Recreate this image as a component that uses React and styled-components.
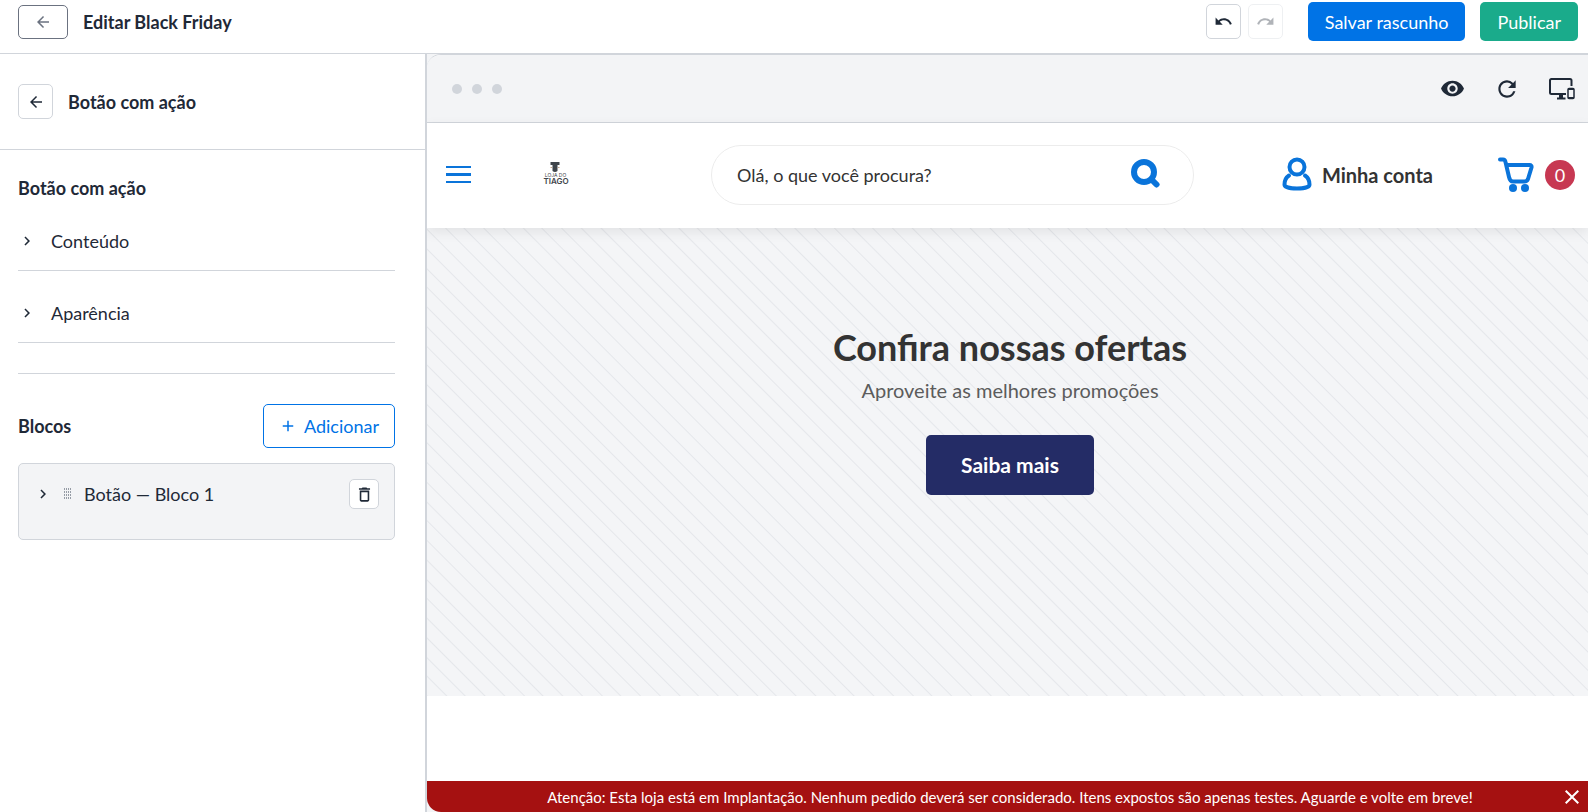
import styled, { createGlobalStyle } from "styled-components";
import {
    MdAdd,
    MdArrowBack,
    MdChevronRight,
    MdClose,
    MdDeleteOutline,
    MdRedo,
    MdRefresh,
    MdUndo,
    MdVisibility,
} from "react-icons/md";

const sections = ["Conteúdo", "Aparência"]

export default function App(){
    return(
        <>
            <GlobalStyle />
            <Page>
                <TopBar />
                <Workspace>
                    <SideBar />
                    <Preview />
                </Workspace>
            </Page>
        </>
    )
}

function TopBar(){
    return(
        <Header>
            <BackButton aria-label="Voltar"><MdArrowBack size={18} /></BackButton>
            <PageTitle>Editar Black Friday</PageTitle>
            <History>
                <SquareButton aria-label="Desfazer"><MdUndo size={19} /></SquareButton>
                <SquareButton aria-label="Refazer" disabled><MdRedo size={19} /></SquareButton>
            </History>
            <Actions>
                <ActionButton $color="#0073e6">Salvar rascunho</ActionButton>
                <ActionButton $color="#1aab8b">Publicar</ActionButton>
            </Actions>
        </Header>
    )
}

function SideBar(){
    return(
        <Side>
            <SideHeader>
                <SquareButton aria-label="Voltar"><MdArrowBack size={18} /></SquareButton>
                <Title>Botão com ação</Title>
            </SideHeader>
            <SideContent>
                <Title>Botão com ação</Title>
                {sections.map((name) => (
                    <SectionButton key={name} aria-expanded="false">
                        <MdChevronRight size={18} />
                        {name}
                    </SectionButton>
                ))}
                <Blocks>
                    <BlocksHeader>
                        <Title>Blocos</Title>
                        <AddButton><MdAdd size={18} />Adicionar</AddButton>
                    </BlocksHeader>
                    <BlockCard>
                        <BlockToggle aria-expanded="false">
                            <MdChevronRight size={18} />
                            <GripIcon />
                            Botão — Bloco 1
                        </BlockToggle>
                        <DeleteButton aria-label="Excluir bloco"><MdDeleteOutline size={19} /></DeleteButton>
                    </BlockCard>
                </Blocks>
            </SideContent>
        </Side>
    )
}

function Preview(){
    return(
        <PreviewArea>
            <Browser>
                <BrowserBar>
                    <Dots><Dot /><Dot /><Dot /></Dots>
                    <ToolButton aria-label="Visualizar"><MdVisibility size={25} /></ToolButton>
                    <ToolButton aria-label="Atualizar"><MdRefresh size={26} /></ToolButton>
                    <ToolButton aria-label="Dispositivos"><DevicesIcon /></ToolButton>
                </BrowserBar>
                <StoreHeader>
                    <StoreBrand>
                        <MenuButton aria-label="Menu"><MenuIcon /></MenuButton>
                        <StoreLogo />
                    </StoreBrand>
                    <Search onSubmit={(e) => e.preventDefault()}>
                        <SearchInput type="search" aria-label="Buscar" placeholder="Olá, o que você procura?" />
                        <SearchButton aria-label="Buscar"><SearchIcon /></SearchButton>
                    </Search>
                    <StoreLinks>
                        <Account href="#conta"><UserIcon />Minha conta</Account>
                        <Cart href="#carrinho" aria-label="Carrinho"><CartIcon /><Badge>0</Badge></Cart>
                    </StoreLinks>
                </StoreHeader>
                <Offers>
                    <OffersTitle>Confira nossas ofertas</OffersTitle>
                    <OffersText>Aproveite as melhores promoções</OffersText>
                    <OffersLink href="#ofertas">Saiba mais</OffersLink>
                </Offers>
                <Notice>
                    <NoticeText>Atenção: Esta loja está em Implantação. Nenhum pedido deverá ser considerado. Itens expostos são apenas testes. Aguarde e volte em breve!</NoticeText>
                    <NoticeClose aria-label="Fechar"><MdClose size={24} /></NoticeClose>
                </Notice>
            </Browser>
        </PreviewArea>
    )
}

function GripIcon(){
    return(
        <svg width="8" height="12" viewBox="0 0 8 12" fill="#969ca6" aria-hidden="true">
            {[0, 3, 6, 9].map((y) => [0, 2, 4, 6].map((x) => (
                <rect key={`${x}-${y}`} x={x} y={y} width="1" height="2" />
            )))}
        </svg>
    )
}

function DevicesIcon(){
    return(
        <svg width="26" height="22" viewBox="0 0 26 22" fill="none" stroke="currentColor" strokeWidth="2" aria-hidden="true">
            <path d="M17 16H2.5Q1 16 1 14.500V2.500Q1 1 2.500 1H21Q22.500 1 22.500 2.500V8" />
            <path d="M8 20.500H16.500" strokeWidth="2" />
            <path d="M12 16V20.500" strokeWidth="4" />
            <rect x="19" y="10.500" width="6" height="10" rx="1" strokeWidth="1.500" />
            <path d="M19 11.500H25M19 19.500H25" strokeWidth="1" />
        </svg>
    )
}

function MenuIcon(){
    return(
        <svg width="25" height="18" viewBox="0 0 25 18" fill="#0a74da" aria-hidden="true">
            <rect width="25" height="2" />
            <rect y="7" width="25" height="3" />
            <rect y="15" width="25" height="2" />
        </svg>
    )
}

function StoreLogo(){
    return(
        <svg width="28" height="26" viewBox="0 0 28 26" fill="#3f454b" role="img" aria-label="Loja do Tiago">
            <path d="M7.500 0H16.500V3H14.500V9Q12 11 9.500 9V3H7.500Z" />
            <path d="M7.500 5.500H9M15 5.500H16.500" stroke="#c9a98a" />
            <text x="12.500" y="14.500" fontSize="5" textAnchor="middle" fontFamily="Inter, sans-serif">LOJA DO</text>
            <text x="13" y="22" fontSize="8" fontWeight="600" textAnchor="middle" fontFamily="Inter, sans-serif">TIAGO</text>
        </svg>
    )
}

function SearchIcon(){
    return(
        <svg width="29" height="32" viewBox="0 0 29 32" fill="none" stroke="#0a74da" strokeLinecap="round" aria-hidden="true">
            <circle cx="13" cy="13" r="10" strokeWidth="6" />
            <path d="M21 21L25.500 25.500" strokeWidth="6" />
        </svg>
    )
}

function UserIcon(){
    return(
        <svg width="30" height="36" viewBox="0 0 30 36" fill="none" stroke="#0a74da" strokeWidth="4" strokeLinecap="round" aria-hidden="true">
            <circle cx="15" cy="10" r="7.500" />
            <path d="M7 18.500C4 20.500 2.500 24 2.500 27.500C2.500 30 8 31.500 15 31.500S27.500 30 27.500 27.500C27.500 24 26 20.500 23 18.500" />
        </svg>
    )
}

function CartIcon(){
    return(
        <svg width="36" height="36" viewBox="0 0 36 36" fill="none" stroke="#0a74da" strokeWidth="4" strokeLinecap="round" strokeLinejoin="round" aria-hidden="true">
            <path d="M2 2.500H5Q7 2.500 7.500 5L11 20Q12 24.500 15 24.500H26.500Q29 24.500 30 22L33.500 10.500Q34 8 31.500 8H8.500" />
            <circle cx="15" cy="31" r="4" fill="#0a74da" stroke="none" />
            <circle cx="27" cy="31" r="4" fill="#0a74da" stroke="none" />
        </svg>
    )
}

const GlobalStyle = createGlobalStyle`
    * {
        box-sizing: border-box;
    }
    body {
        margin: 0;
        background: #ffffff;
        color: #1f2937;
        font-family: Lato, sans-serif;
        font-size: 18px;
        line-height: 22px;
    }
    h1, h2, p {
        margin: 0;
    }
    button {
        padding: 0;
        border: none;
        background: none;
        color: inherit;
        font: inherit;
        cursor: pointer;
    }
    svg {
        display: block;
        flex-shrink: 0;
    }
`
const Page = styled.div`
    display: flex;
    flex-direction: column;
    min-height: 100vh;
`
const Header = styled.header`
    display: flex;
    align-items: center;
    height: 54px;
    padding: 0 10px 10px 18px;
    border-bottom: 1px solid #d1d5db;
`
const BackButton = styled.button`
    display: flex;
    justify-content: center;
    align-items: center;
    width: 50px;
    height: 34px;
    margin-right: 15px;
    border: 1px solid #6b7280;
    border-radius: 5px;
    color: #6b7280;
`
const Title = styled.h2`
    font-size: 18px;
    font-weight: 700;
    line-height: 22px;
`
const PageTitle = styled(Title).attrs({ as: "h1" })``

const History = styled.div`
    display: flex;
    gap: 7px;
    margin-left: auto;
`
const SquareButton = styled.button`
    display: flex;
    justify-content: center;
    align-items: center;
    width: 35px;
    height: 35px;
    background: #ffffff;
    border: 1px solid #d1d5db;
    border-radius: 5px;

    &:disabled {
        opacity: 0.35;
        cursor: default;
    }
`
const Actions = styled.div`
    display: flex;
    gap: 15px;
    margin-left: 25px;
`
const ActionButton = styled.button`
    height: 39px;
    padding: 0 17px;
    background: ${(props) => props.$color};
    border-radius: 5px;
    color: #ffffff;
`
const Workspace = styled.main`
    display: flex;
    flex: 1;
`
const Side = styled.aside`
    flex-shrink: 0;
    width: 425px;
`
const SideHeader = styled.div`
    display: flex;
    align-items: center;
    gap: 15px;
    height: 96px;
    padding: 0 18px;
    border-bottom: 1px solid #d1d5db;
`
const SideContent = styled.div`
    padding: 27px 30px 27px 18px;
`
const SectionButton = styled.button`
    display: flex;
    align-items: center;
    gap: 15px;
    width: 100%;
    padding: 31px 0 18px;
    border-bottom: 1px solid #d1d5db;
`
const Blocks = styled.section`
    margin-top: 30px;
    padding-top: 30px;
    border-top: 1px solid #d1d5db;
`
const BlocksHeader = styled.div`
    display: flex;
    justify-content: space-between;
    align-items: center;
    margin-bottom: 15px;
`
const AddButton = styled.button`
    display: flex;
    align-items: center;
    gap: 7px;
    height: 44px;
    padding: 0 15px;
    border: 1px solid #0073e6;
    border-radius: 5px;
    color: #0073e6;
`
const BlockCard = styled.div`
    display: flex;
    justify-content: space-between;
    align-items: center;
    padding: 15px 15px 30px;
    background: #f3f4f6;
    border: 1px solid #d1d5db;
    border-radius: 5px;
`
const BlockToggle = styled.button`
    display: flex;
    align-items: center;
    gap: 12px;
`
const DeleteButton = styled(SquareButton)`
    width: 30px;
    height: 30px;
`
const PreviewArea = styled.section`
    display: flex;
    flex: 1;
    min-width: 0;
    background: #f3f4f6;
    border-left: 2px solid #d1d5db;
`
const Browser = styled.div`
    display: flex;
    flex-direction: column;
    flex: 1;
    min-width: 0;
    background: #ffffff;
    border-top: 1px solid #d1d5db;
    border-radius: 14px 0 0 14px;
    overflow: hidden;
`
const BrowserBar = styled.div`
    display: flex;
    align-items: center;
    gap: 15px;
    height: 68px;
    padding: 0 6px 0 25px;
    background: #f3f4f6;
    border-bottom: 1px solid #d1d5db;
`
const Dots = styled.div`
    display: flex;
    gap: 10px;
    margin-right: auto;
`
const Dot = styled.span`
    width: 10px;
    height: 10px;
    background: #d1d5db;
    border-radius: 50%;
`
const ToolButton = styled.button`
    display: flex;
    justify-content: center;
    align-items: center;
    width: 40px;
    height: 40px;
`
const StoreHeader = styled.header`
    display: flex;
    align-items: center;
    height: 105px;
    padding: 0 13px 2px 19px;
    background: #ffffff;
    box-shadow: 0 4px 12px rgba(0, 0, 0, 0.08);
    z-index: 1;
`
const StoreBrand = styled.div`
    display: flex;
    align-items: center;
    gap: 72px;
    width: 265px;
`
const MenuButton = styled.button`
    height: 18px;
`
const Search = styled.form`
    display: flex;
    align-items: center;
    flex: 1;
    min-width: 0;
    height: 60px;
    padding: 0 33px 0 25px;
    border: 1px solid #ececec;
    border-radius: 30px;
`
const SearchInput = styled.input`
    flex: 1;
    min-width: 0;
    padding: 0;
    border: none;
    outline: none;
    background: none;
    font: inherit;
    color: #333333;

    &::placeholder {
        color: #333333;
        opacity: 1;
    }
`
const SearchButton = styled.button`
    height: 32px;
`
const StoreLinks = styled.nav`
    display: flex;
    align-items: center;
    gap: 65px;
    padding-left: 88px;
`
const Account = styled.a`
    display: flex;
    align-items: center;
    gap: 10px;
    font-size: 20px;
    font-weight: 700;
    line-height: 24px;
    color: #333333;
    text-decoration: none;
    white-space: nowrap;
`
const Cart = styled.a`
    display: flex;
    align-items: center;
    gap: 11px;
    text-decoration: none;
`
const Badge = styled.span`
    width: 30px;
    height: 30px;
    background: #c73852;
    border-radius: 50%;
    line-height: 30px;
    text-align: center;
    color: #ffffff;
`
const Offers = styled.section`
    display: flex;
    flex-direction: column;
    align-items: center;
    padding: 97px 16px 201px 21px;
    background: repeating-linear-gradient(
        45deg,
        #e5e7eb 0px,
        #f4f5f7 1px,
        #f4f5f7 13px,
        #e5e7eb 14px,
        #f4f5f7 15px,
        #f4f5f7 26px,
        #e5e7eb 27px,
        #f4f5f7 28px,
        #f4f5f7 40px,
        #e5e7eb 41px,
        #f4f5f7 42px,
        #f4f5f7 54px,
        #e5e7eb 55px
    );
`
const OffersTitle = styled.h2`
    font-size: 36px;
    font-weight: 700;
    line-height: 44px;
    color: #333333;
`
const OffersText = styled.p`
    margin: 9px 0 33px;
    font-size: 20px;
    line-height: 24px;
    color: #5c5c5c;
`
const OffersLink = styled.a`
    padding: 0 35px;
    background: #242c66;
    border-radius: 5px;
    font-size: 21px;
    font-weight: 700;
    line-height: 60px;
    color: #ffffff;
    text-decoration: none;
`
const Notice = styled.div`
    display: flex;
    align-items: center;
    margin-top: auto;
    padding: 7px 0 6px 37px;
    background: #a51111;
    color: #ffffff;
`
const NoticeText = styled.p`
    flex: 1;
    font-size: 15px;
    line-height: 18px;
    text-align: center;
`
const NoticeClose = styled.button`
    display: flex;
    justify-content: center;
    align-items: center;
    width: 32px;
    height: 18px;
`
